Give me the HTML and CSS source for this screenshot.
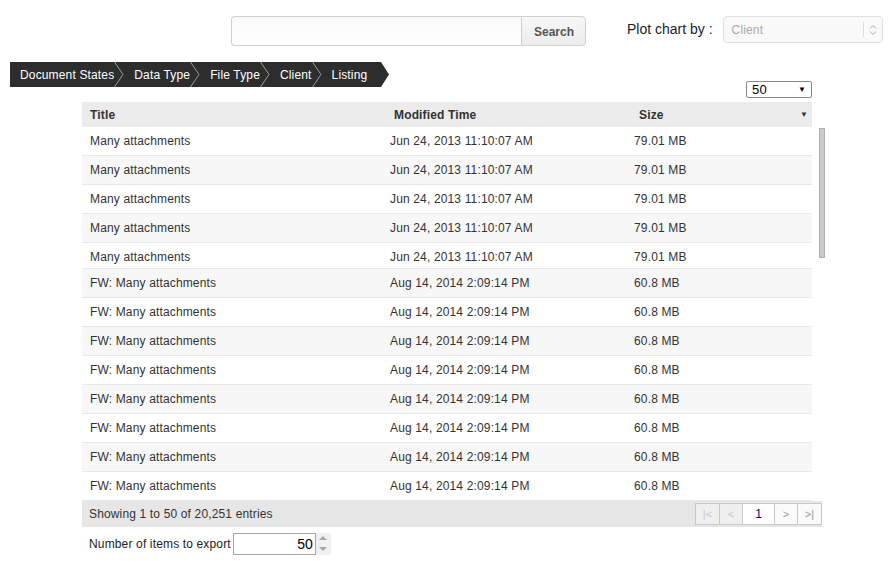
FILE: index.html
```html
<!DOCTYPE html>
<html lang="en">

<head>
	<meta charset="UTF-8">
	<meta name="viewport" content="width=device-width, initial-scale=1.0">
	<title>Document Listing</title>
	<link rel="stylesheet" href="styles.css">
</head>

<body>
	<div class="topbar">
		<div class="search">
			<input type="text" class="search-input">
			<button class="search-btn">Search</button>
		</div>
		<label class="plot-label">Plot chart by :</label>
		<div class="plot-select">
			<span>Client</span>
			<span class="plot-arrows">
				<svg width="8" height="12" viewBox="0 0 8 12"><path d="M1 4.5 L4 1.5 L7 4.5 M1 7.5 L4 10.5 L7 7.5" fill="none" stroke="#aaa" stroke-width="1"/></svg>
			</span>
		</div>
	</div>

	<div class="navrow">
		<div class="crumbs">
			<span class="crumb first">Document States</span><svg class="sep" width="10" height="25" viewBox="0 0 10 25"><path d="M0.5 0 L9 12.5 L0.5 25" fill="none" stroke="#9a9a9a"/></svg>
			<span class="crumb">Data Type</span><svg class="sep" width="10" height="25" viewBox="0 0 10 25"><path d="M0.5 0 L9 12.5 L0.5 25" fill="none" stroke="#9a9a9a"/></svg>
			<span class="crumb">File Type</span><svg class="sep" width="10" height="25" viewBox="0 0 10 25"><path d="M0.5 0 L9 12.5 L0.5 25" fill="none" stroke="#9a9a9a"/></svg>
			<span class="crumb">Client</span><svg class="sep" width="10" height="25" viewBox="0 0 10 25"><path d="M0.5 0 L9 12.5 L0.5 25" fill="none" stroke="#9a9a9a"/></svg>
			<span class="crumb last">Listing</span><svg class="tip" width="8" height="25" viewBox="0 0 8 25"><polygon points="0,0 8,12.5 0,25" fill="#2d2d2d"/></svg>
		</div>
		<div class="length">
			<span>50</span>
			<span class="tri">&#9660;</span>
		</div>
	</div>

	<div class="grid">
		<div class="scrollbar"></div>
		<table>
			<colgroup>
				<col class="c1">
				<col class="c2">
				<col class="c3">
			</colgroup>
			<thead>
				<tr>
					<th>Title</th>
					<th class="h2">Modified Time</th>
					<th class="h3">Size<span class="sort">&#9660;</span></th>
				</tr>
			</thead>
			<tbody id="rows">
			</tbody>
		</table>
		<div class="info">
			<span>Showing 1 to 50 of 20,251 entries</span>
			<div class="pager">
				<span class="pbtn off">|&lt;</span>
				<span class="pbtn off">&lt;</span>
				<span class="pbtn cur">1</span>
				<span class="pbtn">&gt;</span>
				<span class="pbtn">&gt;|</span>
			</div>
		</div>
		<div class="export">
			<span>Number of items to export</span>
			<div class="spin">
				<input type="text" class="spin-input" value="50">
				<span class="spin-btns">
					<span class="up"></span>
					<span class="down"></span>
				</span>
			</div>
		</div>
	</div>

	<script>
		'use strict'

		const rows = document.getElementById('rows')
		const data = []
		for (let i = 0; i < 5; ++i) data.push(['Many attachments', 'Jun 24, 2013 11:10:07 AM', '79.01 MB'])
		for (let i = 0; i < 8; ++i) data.push(['FW: Many attachments', 'Aug 14, 2014 2:09:14 PM', '60.8 MB'])
		data.forEach((d, i) => {
			const tr = document.createElement('tr')
			if (i % 2) tr.className = 'odd'
			if (i == 4) tr.className = 'cut'
			tr.innerHTML = d.map(s => `<td>${s}</td>`).join('')
			rows.append(tr)
		})
	</script>
</body>

</html>
```

FILE: styles.css
```css
body {
	margin: 0;
	font-family: "Liberation Sans", Arial, sans-serif;
	font-size: 12px;
	letter-spacing: 0.15px;
	color: #333;
	background: #fff;
}

.topbar {
	display: flex;
	align-items: flex-start;
	padding: 16px 0 0 231px;
	height: 30px;
}

.search {
	display: flex;
	height: 30px;
}
.search-input {
	box-sizing: border-box;
	width: 290px;
	height: 30px;
	margin: 0;
	border: 1px solid #d0d0d0;
	border-right: none;
	border-radius: 4px 0 0 4px;
	background: linear-gradient(#fafafa, #fff);
}
.search-btn {
	box-sizing: border-box;
	width: 65px;
	height: 30px;
	margin: 0;
	border: 1px solid #d0d0d0;
	border-radius: 0 4px 4px 0;
	background: linear-gradient(#f7f7f7, #ececec);
	font-family: "Liberation Sans", Arial, sans-serif;
	font-size: 12px;
	font-weight: bold;
	color: #555;
	padding: 1px 0 0 1px;
}

.plot-label {
	font-size: 14px;
	letter-spacing: 0;
	color: #222;
	margin: 5px 0 0 41px;
}
.plot-select {
	box-sizing: border-box;
	display: flex;
	align-items: center;
	justify-content: space-between;
	width: 160px;
	height: 27px;
	margin-left: 10px;
	padding: 0 0 0 8px;
	border: 1px solid #e0e0e0;
	border-radius: 4px;
	background: #f9f9f9;
	color: #aaa;
}
.plot-arrows {
	display: flex;
	align-items: center;
	height: 15px;
	padding: 0 5px 0 5px;
	border-left: 1px solid #ddd;
}

.navrow {
	display: flex;
	justify-content: space-between;
	margin-top: 16px;
	height: 36px;
	padding: 0 81px 0 10px;
}
.crumbs {
	display: flex;
	align-self: flex-start;
	height: 25px;
}
.crumb {
	background: #2d2d2d;
	color: #fff;
	line-height: 26px;
	padding-left: 10px;
}
.sep {
	background: #2d2d2d;
	display: block;
}
.crumb.last {
	padding-right: 14px;
}
.tip {
	display: block;
}

.length {
	box-sizing: border-box;
	align-self: flex-end;
	display: flex;
	justify-content: space-between;
	align-items: center;
	width: 66px;
	height: 17px;
	padding: 0 5px 0 5px;
	border: 1px solid #888;
	border-radius: 2px;
	font-size: 13px;
	color: #000;
}
.tri {
	font-size: 8px;
}

.grid {
	position: relative;
	margin: 4px 0 0 82px;
	width: 740px;
}
.scrollbar {
	position: absolute;
	left: 737px;
	top: 26px;
	width: 4px;
	height: 128px;
	background: #cacaca;
	border: 1px solid #b0b0b0;
}

table {
	width: 730px;
	border-collapse: collapse;
	table-layout: fixed;
}
.c1 { width: 300px; }
.c2 { width: 244px; }
.c3 { width: 186px; }

th {
	background: #ebebeb;
	text-align: left;
	font-weight: bold;
	height: 25px;
	padding: 6px 8px 5px;
	line-height: 14px;
	box-sizing: border-box;
}
th.h2 { padding-left: 12px; }
th.h3 {
	padding-left: 13px;
	position: relative;
}
.sort {
	position: absolute;
	right: 4px;
	top: 6px;
	font-size: 8px;
}

td {
	padding: 7px 8px;
	line-height: 14px;
	border-bottom: 1px solid #e8e8e8;
	white-space: nowrap;
}
tr.odd td {
	background: #f7f7f7;
}
tr.cut td {
	padding-bottom: 4px;
}
tbody tr:nth-child(n+6) td {
	background: #fff;
}
tbody tr:nth-child(2n+6) td {
	background: #f7f7f7;
}

.info {
	display: flex;
	justify-content: space-between;
	align-items: center;
	height: 26px;
	background: #e6e6e6;
	padding-left: 7px;
}
.pager {
	display: flex;
	height: 22px;
}
.pbtn {
	box-sizing: border-box;
	display: flex;
	align-items: center;
	justify-content: center;
	width: 25px;
	height: 22px;
	border: 1px solid #c8c8c8;
	margin-left: -1px;
	background: #fafafa;
	color: #999;
	font-size: 11px;
	letter-spacing: 0;
}
.pbtn.off {
	background: #efefef;
	color: #c8c8c8;
}
.pbtn:nth-child(2), .pbtn:nth-child(4) {
	width: 24px;
}
.pbtn.cur {
	width: 33px;
	background: #fff;
	color: #000080;
	font-size: 12px;
}

.export {
	display: flex;
	align-items: center;
	padding: 6px 0 0 7px;
	color: #222;
}
.spin {
	display: flex;
	margin-left: 2px;
}
.spin-input {
	box-sizing: border-box;
	width: 83px;
	height: 22px;
	margin: 0;
	border: 1px solid #a8a8a8;
	text-align: right;
	font-family: "Liberation Sans", Arial, sans-serif;
	font-size: 14px;
	color: #000;
	padding: 0 2px;
}
.spin-btns {
	display: flex;
	flex-direction: column;
	width: 15px;
	height: 22px;
	background: #f0f0f0;
}
.spin-btns span {
	flex: 1;
	position: relative;
}
.up::after, .down::after {
	content: '';
	position: absolute;
	left: 3px;
	border-left: 4px solid transparent;
	border-right: 4px solid transparent;
}
.up::after {
	top: 3px;
	border-bottom: 4px solid #a8a8a8;
}
.down::after {
	top: 3px;
	border-top: 4px solid #a8a8a8;
}
```
